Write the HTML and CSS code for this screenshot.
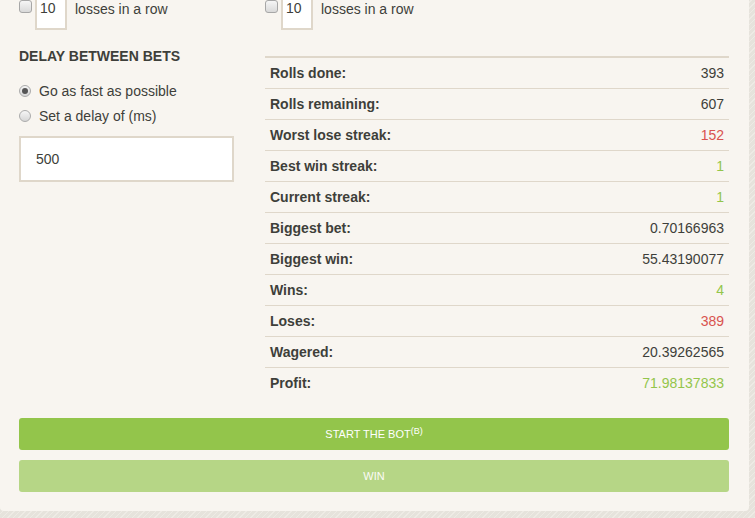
FILE: index.html
```html
<!DOCTYPE html>
<html lang="en">
<head>
<meta charset="utf-8">
<title>Auto bet</title>
<link rel="stylesheet" href="styles.css">
</head>
<body>
<div class="panel">
  <div class="cols">
    <div class="col">
      <label class="stop-row">
        <input type="checkbox" class="check">
        <input type="text" class="num" value="10">
        <span>losses in a row</span>
      </label>

      <h4 class="heading">DELAY BETWEEN BETS</h4>

      <label class="radio-row">
        <input type="radio" name="delay" class="radio" checked>
        <span>Go as fast as possible</span>
      </label>
      <label class="radio-row">
        <input type="radio" name="delay" class="radio">
        <span>Set a delay of (ms)</span>
      </label>

      <input type="text" class="delay-input" value="500">
    </div>

    <div class="col">
      <label class="stop-row">
        <input type="checkbox" class="check">
        <input type="text" class="num" value="10">
        <span>losses in a row</span>
      </label>

      <table class="stats">
        <tbody>
          <tr><th>Rolls done:</th><td>393</td></tr>
          <tr><th>Rolls remaining:</th><td>607</td></tr>
          <tr><th>Worst lose streak:</th><td class="bad">152</td></tr>
          <tr><th>Best win streak:</th><td class="good">1</td></tr>
          <tr><th>Current streak:</th><td class="good">1</td></tr>
          <tr><th>Biggest bet:</th><td>0.70166963</td></tr>
          <tr><th>Biggest win:</th><td>55.43190077</td></tr>
          <tr><th>Wins:</th><td class="good">4</td></tr>
          <tr><th>Loses:</th><td class="bad">389</td></tr>
          <tr><th>Wagered:</th><td>20.39262565</td></tr>
          <tr><th>Profit:</th><td class="good">71.98137833</td></tr>
        </tbody>
      </table>
    </div>
  </div>

  <button class="btn">START THE BOT<sup>(B)</sup></button>
  <button class="btn btn-muted" disabled>WIN</button>
</div>
</body>
</html>
```

FILE: styles.css
```css
html, body {
  margin: 0;
  padding: 0;
}

body {
  width: 755px;
  height: 518px;
  overflow: hidden;
  font-family: "Liberation Sans", Arial, Helvetica, sans-serif;
  font-size: 14px;
  line-height: 20px;
  color: #3e3f3a;
  background-color: #e6e3dc;
  background-image: repeating-linear-gradient(135deg, #e6e3dc 0 3px, #eeebe5 3px 4px);
}

.panel {
  box-sizing: border-box;
  width: 749px;
  height: 525px;
  margin-top: -14px;
  padding: 0 20px 19px 19px;
  background: #f8f5f0;
  border-radius: 0 0 4px 4px;
  display: flex;
  flex-direction: column;
}

.cols {
  display: grid;
  grid-template-columns: 215px 1fr;
  column-gap: 31px;
}

.col {
  display: flex;
  flex-direction: column;
  align-items: stretch;
}

/* checkbox + number + caption */
.stop-row {
  display: flex;
  align-items: center;
  height: 44px;
}

.stop-row span {
  margin-left: 8px;
  position: relative;
  top: 1px;
}

.check {
  appearance: none;
  -webkit-appearance: none;
  box-sizing: border-box;
  width: 13px;
  height: 13px;
  margin: 0 3px 3px 0;
  border: 1px solid #a7a7a7;
  border-radius: 3px;
  background: linear-gradient(#f6f6f6, #d9d9d9);
}

.num {
  box-sizing: border-box;
  width: 32px;
  height: 44px;
  margin: 0;
  padding: 0 0 0 3px;
  border: 2px solid #dfd7ca;
  background: #fff;
  font: inherit;
  color: #3e3f3a;
  outline: none;
}

.heading {
  margin: 16px 0 15px;
  font-size: 14px;
  line-height: 20px;
  font-weight: bold;
}

.radio-row {
  display: flex;
  align-items: center;
  height: 20px;
  margin-bottom: 5px;
}

.radio {
  appearance: none;
  -webkit-appearance: none;
  box-sizing: border-box;
  width: 12px;
  height: 12px;
  margin: 0 8px 0 0;
  border: 1px solid #ababab;
  border-radius: 50%;
  background: linear-gradient(#f6f6f6, #d6d6d6);
  position: relative;
}

.radio:checked::after {
  content: "";
  position: absolute;
  left: 2px;
  top: 2px;
  width: 6px;
  height: 6px;
  border-radius: 50%;
  background: #555;
}

.delay-input {
  box-sizing: border-box;
  width: 100%;
  height: 46px;
  margin: 5px 0 0;
  padding: 0 0 0 15px;
  border: 2px solid #dfd7ca;
  background: #fff;
  font: inherit;
  color: #3e3f3a;
  outline: none;
}

.stats {
  margin-top: 26px;
  width: 100%;
  border-collapse: collapse;
  border-top: 2px solid #dfd7ca;
}

.stats tr + tr {
  border-top: 1px solid #dfd7ca;
}

.stats th,
.stats td {
  padding: 5px 5px;
  line-height: 20px;
}

.stats th {
  text-align: left;
  font-weight: bold;
}

.stats td {
  text-align: right;
}

.stats .good {
  color: #93c54b;
}

.stats .bad {
  color: #d9534f;
}

.btn {
  display: block;
  width: 100%;
  height: 32px;
  margin: 20px 0 0;
  padding: 0;
  border: none;
  border-radius: 3px;
  background: #93c54b;
  color: #fff;
  font-family: "Liberation Sans", Arial, Helvetica, sans-serif;
  font-size: 11px;
  line-height: 32px;
}

.btn sup {
  font-size: 9px;
  line-height: 0;
  vertical-align: 4px;
}

.btn-muted {
  margin-top: 10px;
  background: #b6d686;
  color: #fcfbf7;
}
```
